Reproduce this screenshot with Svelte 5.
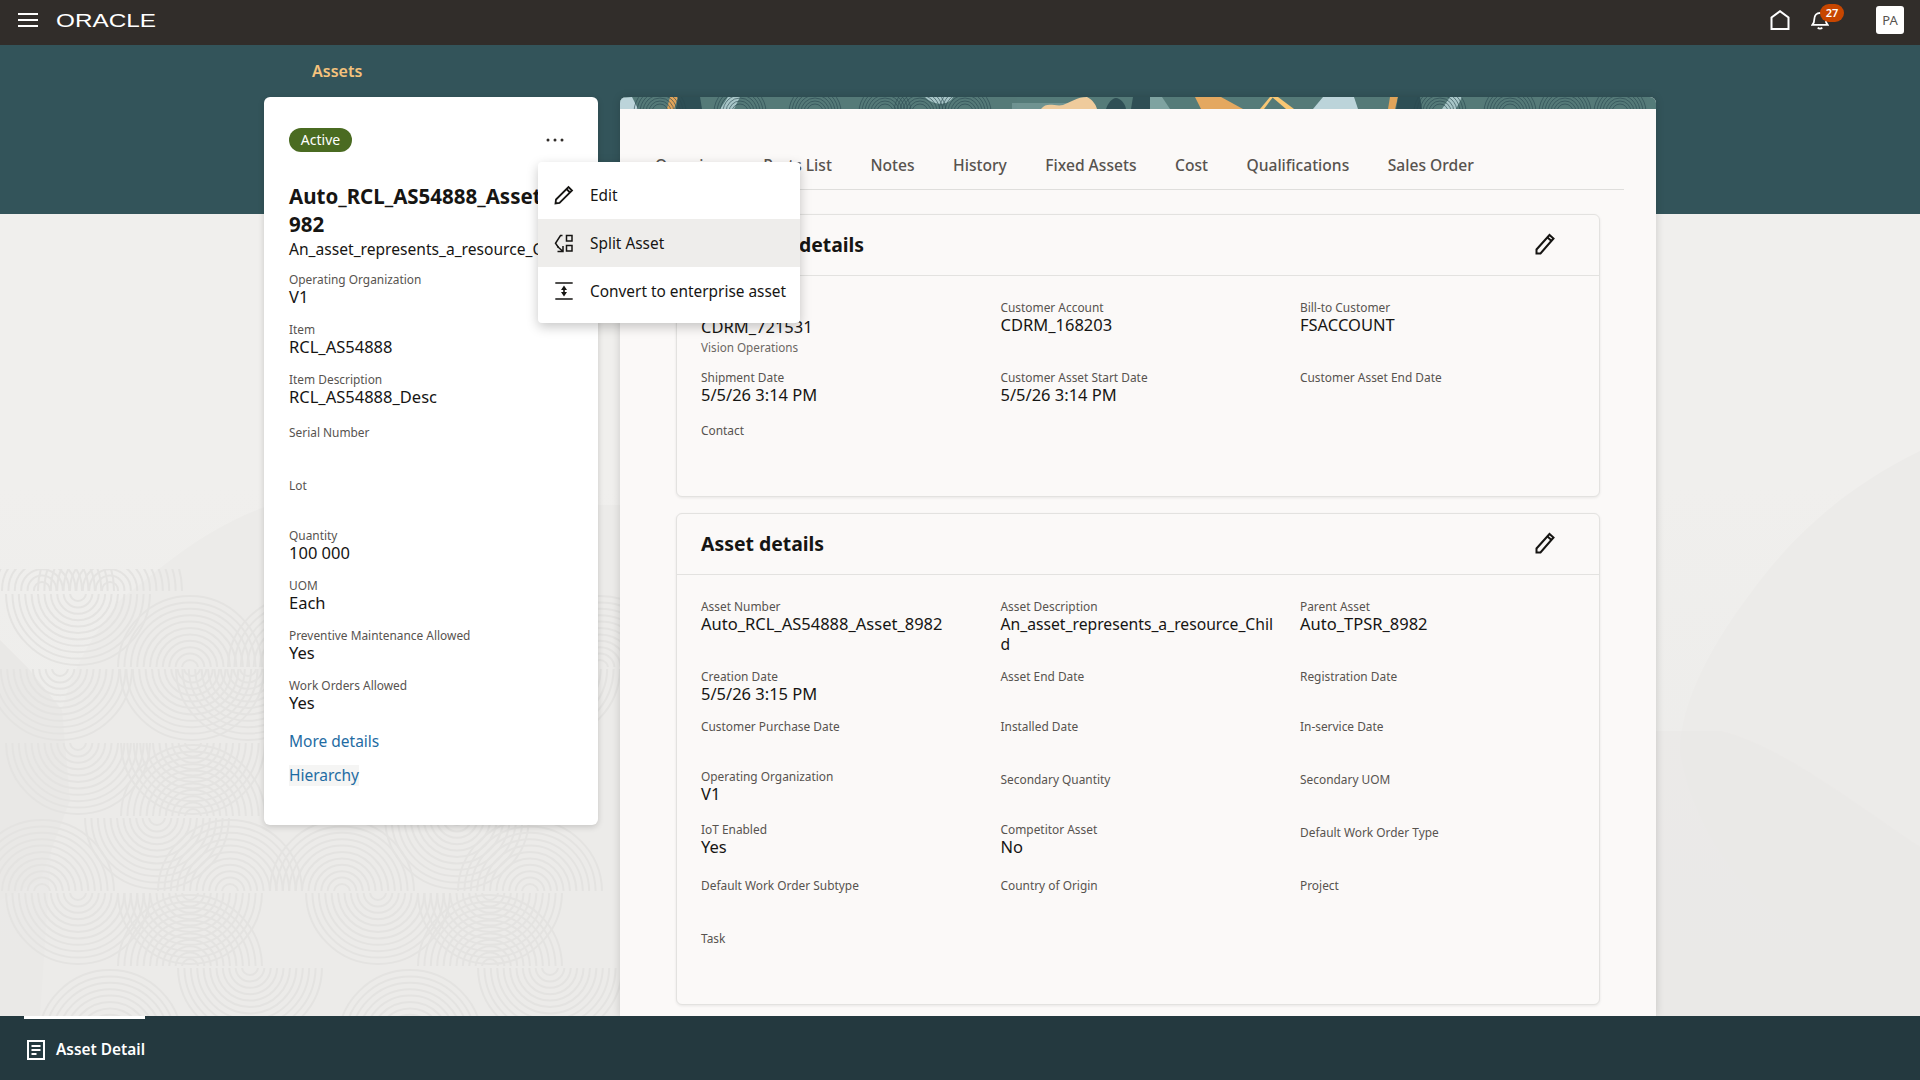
<script lang="ts">
	// background arcs: one entry per tile row, [cx, cy] of each ring set
	const tileRows = [
		{ y: 568, h: 22, centers: [[42, 590], [110, 590]] },
		{ y: 593, h: 73, centers: [[78, 593], [190, 668], [300, 668]] },
		{ y: 668, h: 73, centers: [[60, 668], [192, 668], [248, 668]] },
		{ y: 742, h: 73, centers: [[78, 742], [193, 817], [193, 742]] },
		{ y: 817, h: 73, centers: [[157, 817], [42, 892], [230, 892]] },
		{ y: 892, h: 73, centers: [[78, 892], [190, 967], [190, 892]] },
		{ y: 967, h: 73, centers: [[250, 967], [110, 1042]] }
	];
	const radii = Array.from({ length: 11 }, (_, i) => 8 + i * 6.4);
	const repeats = [0, 300];

	const bannerRings = [40, 120, 195, 265, 300, 345, 820, 890, 945, 1000];
	const bannerRadii = [8, 11, 14, 17, 20, 23, 26];

	const shipmentRows = [
		[
			{ label: 'Ship-to Customer', value: 'CDRM_721531', sub: 'Vision Operations', nudge: true },
			{ label: 'Customer Account', value: 'CDRM_168203' },
			{ label: 'Bill-to Customer', value: 'FSACCOUNT' }
		],
		[
			{ label: 'Shipment Date', value: '5/5/26 3:14 PM' },
			{ label: 'Customer Asset Start Date', value: '5/5/26 3:14 PM' },
			{ label: 'Customer Asset End Date' }
		],
		[{ label: 'Contact', shift: true }]
	];

	const assetRows = [
		[
			{ label: 'Asset Number', value: 'Auto_RCL_AS54888_Asset_8982' },
			{ label: 'Asset Description', value: 'An_asset_represents_a_resource_Child', tight: true },
			{ label: 'Parent Asset', value: 'Auto_TPSR_8982' }
		],
		[
			{ label: 'Creation Date', value: '5/5/26 3:15 PM' },
			{ label: 'Asset End Date' },
			{ label: 'Registration Date' }
		],
		[{ label: 'Customer Purchase Date' }, { label: 'Installed Date' }, { label: 'In-service Date' }],
		[
			{ label: 'Operating Organization', value: 'V1' },
			{ label: 'Secondary Quantity', shift: true },
			{ label: 'Secondary UOM', shift: true }
		],
		[
			{ label: 'IoT Enabled', value: 'Yes' },
			{ label: 'Competitor Asset', value: 'No' },
			{ label: 'Default Work Order Type', shift: true }
		],
		[
			{ label: 'Default Work Order Subtype', shift: true },
			{ label: 'Country of Origin', shift: true },
			{ label: 'Project', shift: true }
		],
		[{ label: 'Task', shift: true }]
	];

	const summary = [
		{ label: 'Operating Organization', value: 'V1' },
		{ label: 'Item', value: 'RCL_AS54888' },
		{ label: 'Item Description', value: 'RCL_AS54888_Desc' },
		{ label: 'Serial Number', shift: true },
		{ label: 'Lot', shift: true },
		{ label: 'Quantity', value: '100 000' },
		{ label: 'UOM', value: 'Each' },
		{ label: 'Preventive Maintenance Allowed', value: 'Yes' },
		{ label: 'Work Orders Allowed', value: 'Yes' }
	];

	const tabs = ['Overview', 'Parts List', 'Notes', 'History', 'Fixed Assets', 'Cost', 'Qualifications', 'Sales Order'];
</script>

{#snippet field(f)}
	<div class="field" class:shift={f.shift} class:nudge={f.nudge} class:tight={f.tight}>
		<div class="label">{f.label}</div>
		{#if f.value}<div class="value">{f.value}</div>{/if}
		{#if f.sub}<div class="sub">{f.sub}</div>{/if}
	</div>
{/snippet}

{#snippet detailCard(title, rows)}
	<section class="card">
		<header class="card-head">
			<h2>{title}</h2>
			<svg class="edit" viewBox="0 0 24 24" fill="none" stroke="currentColor" stroke-width="2">
				<path d="M3.5 21.5v-4L16.5 3l4 3.5L7.5 21.5Z" />
				<path d="M14.5 5.5l4 3.5" />
			</svg>
		</header>
		<div class="card-body">
			{#each rows as row}
				{#each row as f}
					{@render field(f)}
				{/each}
				{#each Array(3 - row.length) as _}
					<div></div>
				{/each}
			{/each}
		</div>
	</section>
{/snippet}

<div class="app">
	<svg class="backdrop" viewBox="0 0 1920 1080" aria-hidden="true">
		<defs>
			{#each tileRows as row, i}
				<clipPath id="tile-row-{i}"><rect x="0" y={row.y + 1} width="640" height={row.h} /></clipPath>
			{/each}
		</defs>
		<path d="M1920 451C1840 490 1790 540 1753 590 1715 640 1680 700 1680 752 1690 810 1720 860 1753 894 1800 940 1860 970 1920 981Z" fill="#ecebe9" />
		<path d="M0 731H1720C1780 745 1850 800 1920 847V1016H0Z" fill="#e9e8e6" opacity="0.55" />
		<path d="M270 505C200 530 160 570 120 600 90 640 70 670 60 720L40 1016H640V505Z" fill="#ecebe9" />
		<path d="M0 640 28 668 62 710 70 800 40 880 0 900Z" fill="#e9e8e6" />
		{#each tileRows as row, i}
			<g clip-path="url(#tile-row-{i})" fill="none" stroke="#e4e3e1" stroke-width="2">
				{#each row.centers as [cx, cy]}
					{#each repeats as dx}
						{#each radii as r}
							<circle cx={cx + dx} {cy} {r} />
						{/each}
					{/each}
				{/each}
			</g>
		{/each}
	</svg>

	<header class="topbar">
		<svg class="burger" viewBox="0 0 20 14" fill="#fff" aria-hidden="true">
			<rect width="20" height="2" /><rect y="6" width="20" height="2" /><rect y="12" width="20" height="2" />
		</svg>
		<span class="logo">ORACLE</span>
		<div class="top-actions">
			<svg class="home" viewBox="0 0 20 20" fill="none" stroke="#fff" stroke-width="2">
				<path d="M1.5 19V7.5L10 1.2l8.5 6.3V19Z" />
			</svg>
			<div class="bell-wrap">
				<svg class="bell" viewBox="0 0 20 22" fill="none" stroke="#fff" stroke-width="2">
					<path d="M1.5 16.5c2-2 2.2-3.5 2.2-6.5 0-4 2.6-6.8 6.3-6.8s6.3 2.8 6.3 6.8c0 3 .2 4.5 2.2 6.5Z" />
					<path d="M7.5 19.5c1.2 1.3 3.8 1.3 5 0" />
				</svg>
				<span class="badge">27</span>
			</div>
			<span class="avatar">PA</span>
		</div>
	</header>

	<main class="page">
		<div class="band"></div>
		<div class="crumb">Assets</div>
		<div class="columns">
			<aside class="summary-wrap">
				<div class="summary">
					<div class="summary-top">
						<span class="pill">Active</span>
						<svg class="dots" viewBox="0 0 18 4" fill="#312d2a" aria-hidden="true">
							<circle cx="2" cy="2" r="1.5" /><circle cx="9" cy="2" r="1.5" /><circle cx="16" cy="2" r="1.5" />
						</svg>
					</div>
					<h1>Auto_RCL_AS54888_Asset_8982</h1>
					<div class="desc">An_asset_represents_a_resource_Child</div>
					<div class="summary-fields">
						{#each summary as f}
							{@render field(f)}
						{/each}
					</div>
					<a class="link more" href="#more">More details</a>
					<a class="link hier" href="#hierarchy">Hierarchy</a>
				</div>

				<div class="menu" role="menu">
					<div class="menu-item" role="menuitem">
						<svg class="icon" viewBox="0 0 24 24" fill="none" stroke="currentColor" stroke-width="1.8">
							<path d="M3.5 20.5 4 16.5 16.5 4l3.5 3.5L7.5 20Z" />
							<path d="M14.5 6l3.5 3.5" />
						</svg>
						Edit
					</div>
					<div class="menu-item active" role="menuitem">
						<svg class="icon" viewBox="0 0 24 24" fill="none" stroke="currentColor" stroke-width="1.5">
							<rect x="14.5" y="4.5" width="5.5" height="5.5" />
							<rect x="14.5" y="14.5" width="5.5" height="5.5" />
							<path d="M10.5 4.5H8.5L3.5 12.3 6.5 16.5" />
							<path d="M5.5 20.5H11V15M5.5 15.5 11 20.5" />
						</svg>
						Split Asset
					</div>
					<div class="menu-item" role="menuitem">
						<svg class="icon" viewBox="0 0 24 24" fill="none" stroke="currentColor" stroke-width="1.6">
							<path d="M3.3 4h17.4M3.3 20h17.4M12 9v6" />
							<path d="M12 6.5 9 11h6ZM12 17.5 9 13h6Z" fill="currentColor" stroke="none" />
						</svg>
						Convert to enterprise asset
					</div>
				</div>
			</aside>

			<section class="panel">
				<svg class="banner" viewBox="0 0 1036 12" preserveAspectRatio="none" aria-hidden="true">
					<defs>
						<clipPath id="banner-clip"><rect width="1036" height="12" /></clipPath>
					</defs>
					<g clip-path="url(#banner-clip)">
						<rect width="1036" height="12" fill="#557b79" />
						<path d="M0 12V1L12 0 18 12Z" fill="#bcd4da" />
						<path d="M50 0h8l-4 12h-7Z" fill="#e2a45b" />
						<path d="M58 0h22l2 12H56Z" fill="#2f4f55" />
						<path d="M100 12 108 0h12l-6 12Z" fill="#a8c6c8" />
						<path d="M305 0h28c-4 9-20 9-28 0Z" fill="#a8c6c8" />
						<path d="M392 6h60v6h-60Z" fill="#6f9391" />
						<path d="M421 12c6-8 14-2 22-4 8-3 14-8 24-8 6 3 9 8 10 12Z" fill="#efcb9c" />
						<path d="M486 12c2-6 6-11 10-11s9 5 10 11Z" fill="#2f4f55" />
						<path d="M511 12 513 0h17l2 12Z" fill="#2f4f55" />
						<path d="M530 0h12l8 12h-20Z" fill="#7fa3a1" />
						<path d="M575 0h26l22 12h-42Z" fill="#e4a860" />
						<path d="M640 12 650 0h3l-9 12Z" fill="#f9c774" />
						<path d="M652 0h6l16 12h-8Z" fill="#f9c774" />
						<path d="M693 12 703 0h31l4 12Z" fill="#bcd4da" />
						<path d="M770 0h8l-3 12h-7Z" fill="#e2a45b" />
						<path d="M778 0h22l2 12h-26Z" fill="#2f4f55" />
						<path d="M822 12 830 0h12l-6 12Z" fill="#a8c6c8" />
						<g fill="none" stroke="#2b4950" stroke-width="0.8" opacity="0.8">
							{#each bannerRings as cx}
								{#each bannerRadii as r}
									<circle {cx} cy="15" {r} />
								{/each}
							{/each}
						</g>
					</g>
				</svg>
				<div class="panel-inner">
					<nav class="tabs">
						{#each tabs as tab}
							<span class="tab">{tab}</span>
						{/each}
					</nav>
					{@render detailCard('Shipment details', shipmentRows)}
					{@render detailCard('Asset details', assetRows)}
				</div>
			</section>
		</div>
	</main>

	<footer class="dock">
		<div class="dock-tab">
			<svg class="doc" viewBox="0 0 18 20" fill="none" stroke="#fff" stroke-width="2">
				<rect x="1" y="1" width="16" height="18" />
				<path d="M4.5 6h9M4.5 10h9M4.5 14h5" />
			</svg>
			Asset Detail
		</div>
	</footer>
</div>

<style>
	:global(body) {
		background: #f0efed;
	}

	.app {
		position: relative;
		display: grid;
		grid-template-rows: 45px 1fr 64px;
		height: 1080px;
		overflow: hidden;
		font-family: 'Noto Sans', 'Open Sans', sans-serif;
		color: #161513;
		background: linear-gradient(#f0efed 45%, #eaeae8);
	}

	.backdrop {
		position: absolute;
		inset: 0;
		width: 1920px;
		height: 1080px;
	}

	.topbar {
		position: relative;
		display: flex;
		align-items: center;
		box-sizing: border-box;
		background: #312d2a;
		padding: 0 0 5px 18px;
	}

	.burger {
		width: 20px;
		height: 14px;
	}

	.logo {
		margin-left: 18px;
		font-family: 'Liberation Sans', sans-serif;
		font-size: 18px;
		line-height: 18px;
		color: #fff;
		transform: translateY(1px) scaleX(1.35);
		transform-origin: left center;
	}

	.top-actions {
		display: flex;
		align-items: center;
		margin-left: auto;
		padding-right: 16px;
	}

	.home {
		width: 20px;
		height: 20px;
	}

	.bell-wrap {
		position: relative;
		margin-left: 21px;
		width: 18px;
		height: 22px;
	}

	.bell {
		width: 18px;
		height: 22px;
	}

	.badge {
		position: absolute;
		left: 9px;
		top: -5px;
		width: 24px;
		height: 18px;
		border-radius: 9px;
		background: #c74600;
		color: #fff;
		font-size: 11px;
		font-weight: 600;
		line-height: 18px;
		text-align: center;
	}

	.avatar {
		margin-left: 47px;
		width: 28px;
		height: 28px;
		border-radius: 3px;
		background: #fff;
		color: #57534f;
		font-size: 13px;
		line-height: 28px;
		text-align: center;
	}

	.page {
		position: relative;
		min-height: 0;
	}

	.band {
		position: absolute;
		left: 0;
		right: 0;
		top: 0;
		height: 169px;
		background: #33545a;
	}

	.crumb {
		position: relative;
		height: 52px;
		padding-left: 312px;
		padding-top: 15px;
		box-sizing: border-box;
		font-size: 16px;
		line-height: 22px;
		font-weight: 600;
		color: #f5c27c;
	}

	.columns {
		position: relative;
		display: flex;
		gap: 22px;
		padding-left: 264px;
		height: calc(100% - 52px);
	}

	.summary-wrap {
		position: relative;
		width: 334px;
	}

	.summary {
		box-sizing: border-box;
		height: 728px;
		padding: 31px 25px 0;
		background: #fff;
		border-radius: 6px;
		box-shadow: 0 2px 6px rgba(0, 0, 0, 0.16);
		overflow: hidden;
	}

	.summary-top {
		display: flex;
		align-items: center;
		justify-content: space-between;
		height: 24px;
		padding-right: 9px;
	}

	.pill {
		width: 63px;
		height: 24px;
		border-radius: 12px;
		background: #4a6b21;
		color: #fff;
		font-size: 14px;
		line-height: 24px;
		text-align: center;
	}

	.dots {
		width: 18px;
		height: 4px;
	}

	h1 {
		margin: 30px 0 0;
		font-size: 20.5px;
		line-height: 28px;
		font-weight: 700;
		width: 284px;
		overflow-wrap: anywhere;
	}

	.desc {
		font-size: 15.6px;
		line-height: 22px;
		white-space: nowrap;
	}

	.summary-fields {
		margin-top: 11px;
	}

	.field {
		box-sizing: border-box;
		min-height: 50px;
		min-width: 0;
		padding-bottom: 14px;
	}

	.field.shift {
		min-height: 53px;
		padding-top: 3px;
	}

	.field.nudge .value {
		margin-top: 2px;
	}

	.field.tight .value {
		font-size: 15.7px;
	}

	.label {
		font-size: 11.9px;
		line-height: 16px;
		color: #57534f;
	}

	.value {
		font-size: 16.5px;
		line-height: 20px;
		overflow-wrap: anywhere;
	}

	.sub {
		margin-top: 2px;
		font-size: 11.7px;
		line-height: 16px;
		color: #6b6762;
	}

	.link {
		display: block;
		width: fit-content;
		font-size: 15.5px;
		line-height: 21px;
		color: #1f6ca3;
		text-decoration: none;
	}

	.more {
		margin-top: 4px;
	}

	.hier {
		margin-top: 13px;
		background: #f5f5f4;
	}

	.menu {
		position: absolute;
		z-index: 5;
		left: 274px;
		top: 65px;
		width: 262px;
		padding: 9px 0 8px;
		background: #fff;
		border-radius: 4px;
		box-shadow: 0 4px 12px rgba(0, 0, 0, 0.22);
	}

	.menu-item {
		display: flex;
		align-items: center;
		gap: 14px;
		height: 48px;
		padding-left: 14px;
		font-size: 15.4px;
	}

	.menu-item.active {
		background: #eeedeb;
	}

	.icon {
		width: 24px;
		height: 24px;
		flex: none;
	}

	.panel {
		position: relative;
		width: 1036px;
		display: flex;
		flex-direction: column;
		background: #fbf9f8;
		box-shadow: 0 0 8px rgba(0, 0, 0, 0.16);
		border-radius: 6px 6px 0 0;
		overflow: hidden;
	}

	.banner {
		display: block;
		flex: none;
		width: 1036px;
		height: 12px;
	}

	.panel-inner {
		padding: 0 32px;
	}

	.tabs {
		display: flex;
		align-items: flex-end;
		gap: 38.5px;
		box-sizing: border-box;
		height: 81px;
		padding: 0 3px 13px;
		border-bottom: 1px solid #dfdedc;
	}

	.tab {
		font-size: 15.6px;
		line-height: 22px;
		font-weight: 500;
		color: #57534f;
	}

	.card {
		margin: 24px 24px 16px;
		background: #fbf9f8;
		border-radius: 6px;
		border: 1px solid #e3e2e0;
		box-shadow: 0 1px 3px rgba(0, 0, 0, 0.08);
	}

	.card-head {
		display: flex;
		align-items: center;
		justify-content: space-between;
		box-sizing: border-box;
		height: 61px;
		padding: 0 42px 2px 24px;
		border-bottom: 1px solid #e3e2e0;
	}

	h2 {
		margin: 0;
		font-size: 19.4px;
		font-weight: 700;
	}

	.edit {
		width: 24px;
		height: 24px;
	}

	.card-body {
		display: grid;
		grid-template-columns: repeat(3, 299.5px);
		padding: 23px 0 24px 24px;
	}

	.card-body .field {
		padding-right: 20px;
	}

	.card + .card {
		margin-top: 0;
	}

	.dock {
		position: relative;
		background: #24393f;
	}

	.dock-tab {
		display: flex;
		align-items: center;
		gap: 11px;
		box-sizing: border-box;
		width: 121px;
		height: 64px;
		margin-left: 24px;
		padding-left: 3px;
		border-top: 3px solid #fff;
		color: #fff;
		font-size: 15.4px;
		font-weight: 600;
		white-space: nowrap;
	}

	.doc {
		width: 18px;
		height: 20px;
		flex: none;
	}
</style>
